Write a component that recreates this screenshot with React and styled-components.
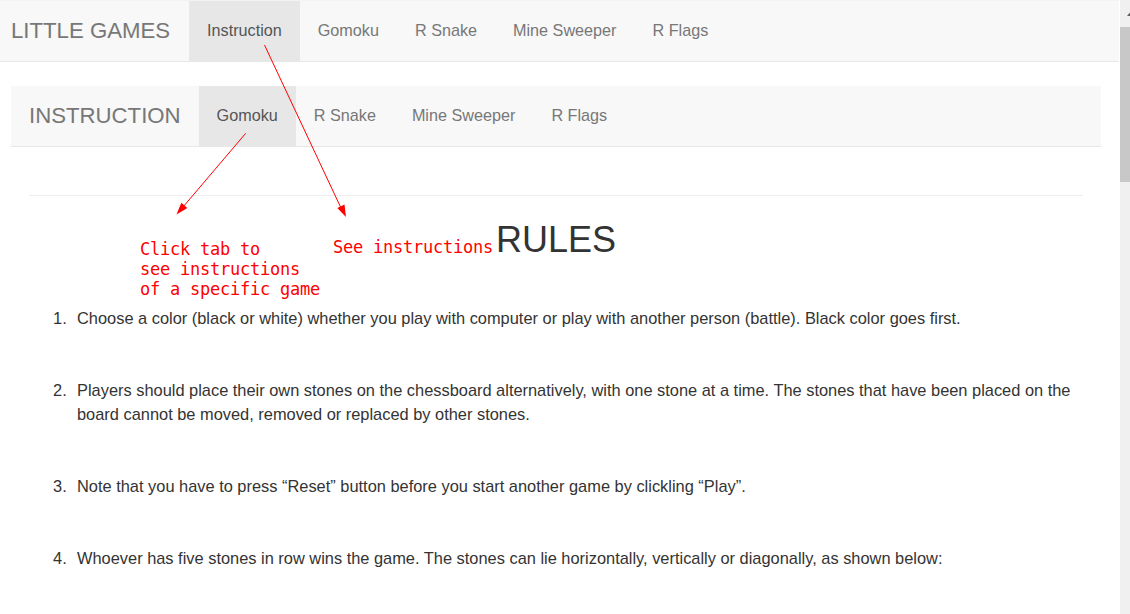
import React from "react";
import styled, { createGlobalStyle } from "styled-components";

const GlobalStyle = createGlobalStyle`
  html, body {
    margin: 0;
    padding: 0;
    overflow: hidden;
    background: #fff;
  }
  body {
    font-family: "Liberation Sans", Arial, sans-serif;
  }
`;

const Screen = styled.div`
  display: flex;
  width: 1130px;
  height: 614px;
  overflow: hidden;
`;

const Page = styled.div`
  position: relative;
  width: 1120px;
  flex-shrink: 0;
  height: 614px;
  overflow: hidden;
`;

const NavBar = styled.nav`
  display: flex;
  height: 60px;
  background: #f8f8f8;
  border-top: ${(props) => (props.$top ? "1px solid #f3f3f3" : "none")};
  border-bottom: 1px solid #e7e7e7;
  margin-right: ${(props) => (props.$top ? "1px" : "0")};
`;

const Brand = styled.div`
  font-size: 22.2px;
  line-height: 59px;
  color: #777;
  padding: ${(props) => (props.$top ? "0 19px 0 11px" : "0 18px")};
  white-space: nowrap;
`;

const NavLink = styled.a`
  display: block;
  padding: 0 18px;
  line-height: 59px;
  font-size: 16.2px;
  color: ${(props) => (props.$active ? "#555" : "#777")};
  background: ${(props) => (props.$active ? "#e7e7e7" : "transparent")};
  text-decoration: none;
  white-space: nowrap;
`;

const Container = styled.div`
  margin: 24px 19px 0 11px;
`;

const Content = styled.div`
  padding: 0 18px;
`;

const Rule = styled.hr`
  margin: 48px 0 0;
  border: 0;
  border-top: 1px solid #eee;
  height: 0;
`;

const Heading = styled.h1`
  margin: 24px 0 0;
  font-size: 36px;
  line-height: 40px;
  font-weight: 500;
  color: #333;
  text-align: center;
`;

const Steps = styled.ol`
  list-style: none;
  counter-reset: step;
  margin: 46px 0 0 24px;
  padding: 0;
`;

const Step = styled.li`
  counter-increment: step;
  padding-left: 24px;
  text-indent: -24px;
  font-size: 16.4px;
  line-height: 24px;
  color: #333;
  margin-bottom: 48px;

  &::before {
    content: counter(step) ".";
    display: inline-block;
    width: 24px;
    text-indent: 0;
  }
`;

const Note = styled.div`
  position: absolute;
  left: ${(props) => props.$x}px;
  top: ${(props) => props.$y}px;
  font-family: "DejaVu Sans Mono", "Liberation Mono", monospace;
  font-size: 17px;
  letter-spacing: -0.23px;
  line-height: 20px;
  color: #ff0000;
  white-space: pre;
`;

const Arrows = styled.svg`
  position: absolute;
  left: 0;
  top: 0;
  pointer-events: none;
`;

const ScrollTrack = styled.div`
  width: 17px;
  flex-shrink: 0;
  display: flex;
  flex-direction: column;
  background: #f0f0f0;
`;

const ScrollButton = styled.div`
  height: 27px;
  display: flex;
  align-items: center;
  padding-left: 7px;
`;

const UpArrow = styled.div`
  width: 0;
  height: 0;
  border-left: 4px solid transparent;
  border-right: 4px solid transparent;
  border-bottom: 5px solid #606060;
`;

const ScrollThumb = styled.div`
  height: 155px;
  background: #c8c8c8;
`;

const topLinks = ["Instruction", "Gomoku", "R Snake", "Mine Sweeper", "R Flags"];
const subLinks = ["Gomoku", "R Snake", "Mine Sweeper", "R Flags"];

const rules = [
  "Choose a color (black or white) whether you play with computer or play with another person (battle). Black color goes first.",
  "Players should place their own stones on the chessboard alternatively, with one stone at a time. The stones that have been placed on the board cannot be moved, removed or replaced by other stones.",
  "Note that you have to press \u201cReset\u201d button before you start another game by clickling \u201cPlay\u201d.",
  "Whoever has five stones in row wins the game. The stones can lie horizontally, vertically or diagonally, as shown below:",
];

const App = () => {
  return (
    <Screen>
      <GlobalStyle />
      <Page>
        <NavBar $top>
          <Brand $top>LITTLE GAMES</Brand>
          {topLinks.map((name, i) => (
            <NavLink key={name} $active={i === 0}>
              {name}
            </NavLink>
          ))}
        </NavBar>

        <Container>
          <NavBar>
            <Brand>INSTRUCTION</Brand>
            {subLinks.map((name, i) => (
              <NavLink key={name} $active={i === 0}>
                {name}
              </NavLink>
            ))}
          </NavBar>

          <Content>
            <Rule />
            <Heading>RULES</Heading>
            <Steps>
              {rules.map((text) => (
                <Step key={text}>{text}</Step>
              ))}
            </Steps>
          </Content>
        </Container>

        <Note $x={140} $y={239}>{"Click tab to\nsee instructions\nof a specific game"}</Note>
        <Note $x={333} $y={237}>See instructions</Note>

        <Arrows width="1120" height="614" viewBox="0 0 1120 614">
          <line x1="264.5" y1="45" x2="341" y2="208" stroke="#ff0000" strokeWidth="1" />
          <polygon points="346,217 337.3,207.9 344.5,204.5" fill="#ff0000" />
          <line x1="245.7" y1="133.3" x2="183" y2="207" stroke="#ff0000" strokeWidth="1" />
          <polygon points="176.5,214.5 181.3,202.8 187.3,208" fill="#ff0000" />
        </Arrows>
      </Page>

      <ScrollTrack>
        <ScrollButton>
          <UpArrow />
        </ScrollButton>
        <ScrollThumb />
      </ScrollTrack>
    </Screen>
  );
};

export default App;
